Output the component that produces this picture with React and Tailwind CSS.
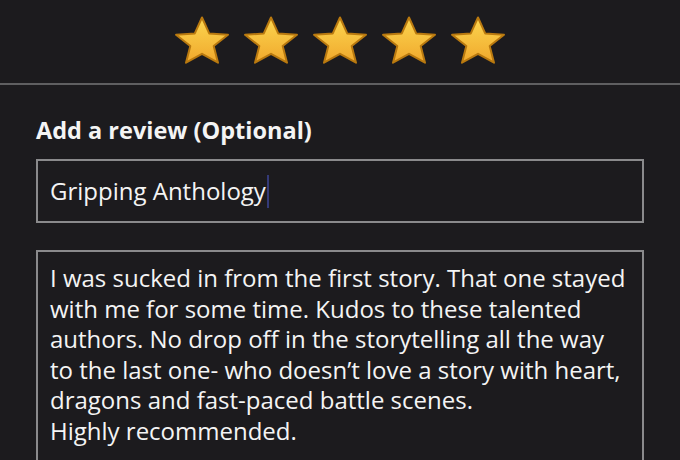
function Star() {
  return (
    <svg width="56" height="50" viewBox="0 0 56 50">
      <defs>
        <linearGradient id="starFill" x1="0" y1="0" x2="0" y2="1">
          <stop offset="0" stopColor="#fcd650" />
          <stop offset="1" stopColor="#f0a82c" />
        </linearGradient>
      </defs>
      <path
        d="M28 1.5 L35.2 17.4 L54 18.8 L39.7 30 L44 46.7 L28 37.8 L12 46.7 L16.3 30 L2 18.8 L20.8 17.4 Z"
        fill="url(#starFill)"
        stroke="#b9790f"
        strokeWidth="2"
        strokeLinejoin="round"
      />
    </svg>
  );
}

export default function App() {
  const review = [
    "I was sucked in from the first story. That one stayed",
    "with me for some time. Kudos to these talented",
    "authors. No drop off in the storytelling all the way",
    "to the last one- who doesn\u2019t love a story with heart,",
    "dragons and fast-paced battle scenes.",
    "Highly recommended.",
  ];

  return (
    <div
      className="h-[460px] w-[680px] overflow-hidden bg-[#1c1b1e] text-[#f4f4f4]"
      style={{ fontFamily: '"Open Sans", "Noto Sans", sans-serif' }}
    >
      {/* rating */}
      <div className="flex h-[83px] items-center justify-center gap-[13px] pb-[2px]">
        <Star />
        <Star />
        <Star />
        <Star />
        <Star />
      </div>
      <div className="h-[2px] bg-[#5f5f61]" />

      <div className="px-[36px]">
        <h2 className="mt-[31px] text-[23.5px] font-bold leading-[28px]">
          Add a review (Optional)
        </h2>

        {/* headline */}
        <div className="mt-[15px] flex h-[64px] items-center border-2 border-[#8a8a8c] pl-[12px]">
          <span className="text-[24px] leading-[30px]">Gripping Anthology</span>
          <span className="ml-[1px] h-[33px] w-[2px] bg-[#343a78]" />
        </div>

        {/* body */}
        <div className="mt-[27px] border-2 border-[#8a8a8c] px-[12px] pt-[11px] pb-[20px]">
          {review.map((line, i) => (
            <div key={i} className="whitespace-nowrap text-[24px] leading-[30.5px]">
              {line}
            </div>
          ))}
        </div>
      </div>
    </div>
  );
}
